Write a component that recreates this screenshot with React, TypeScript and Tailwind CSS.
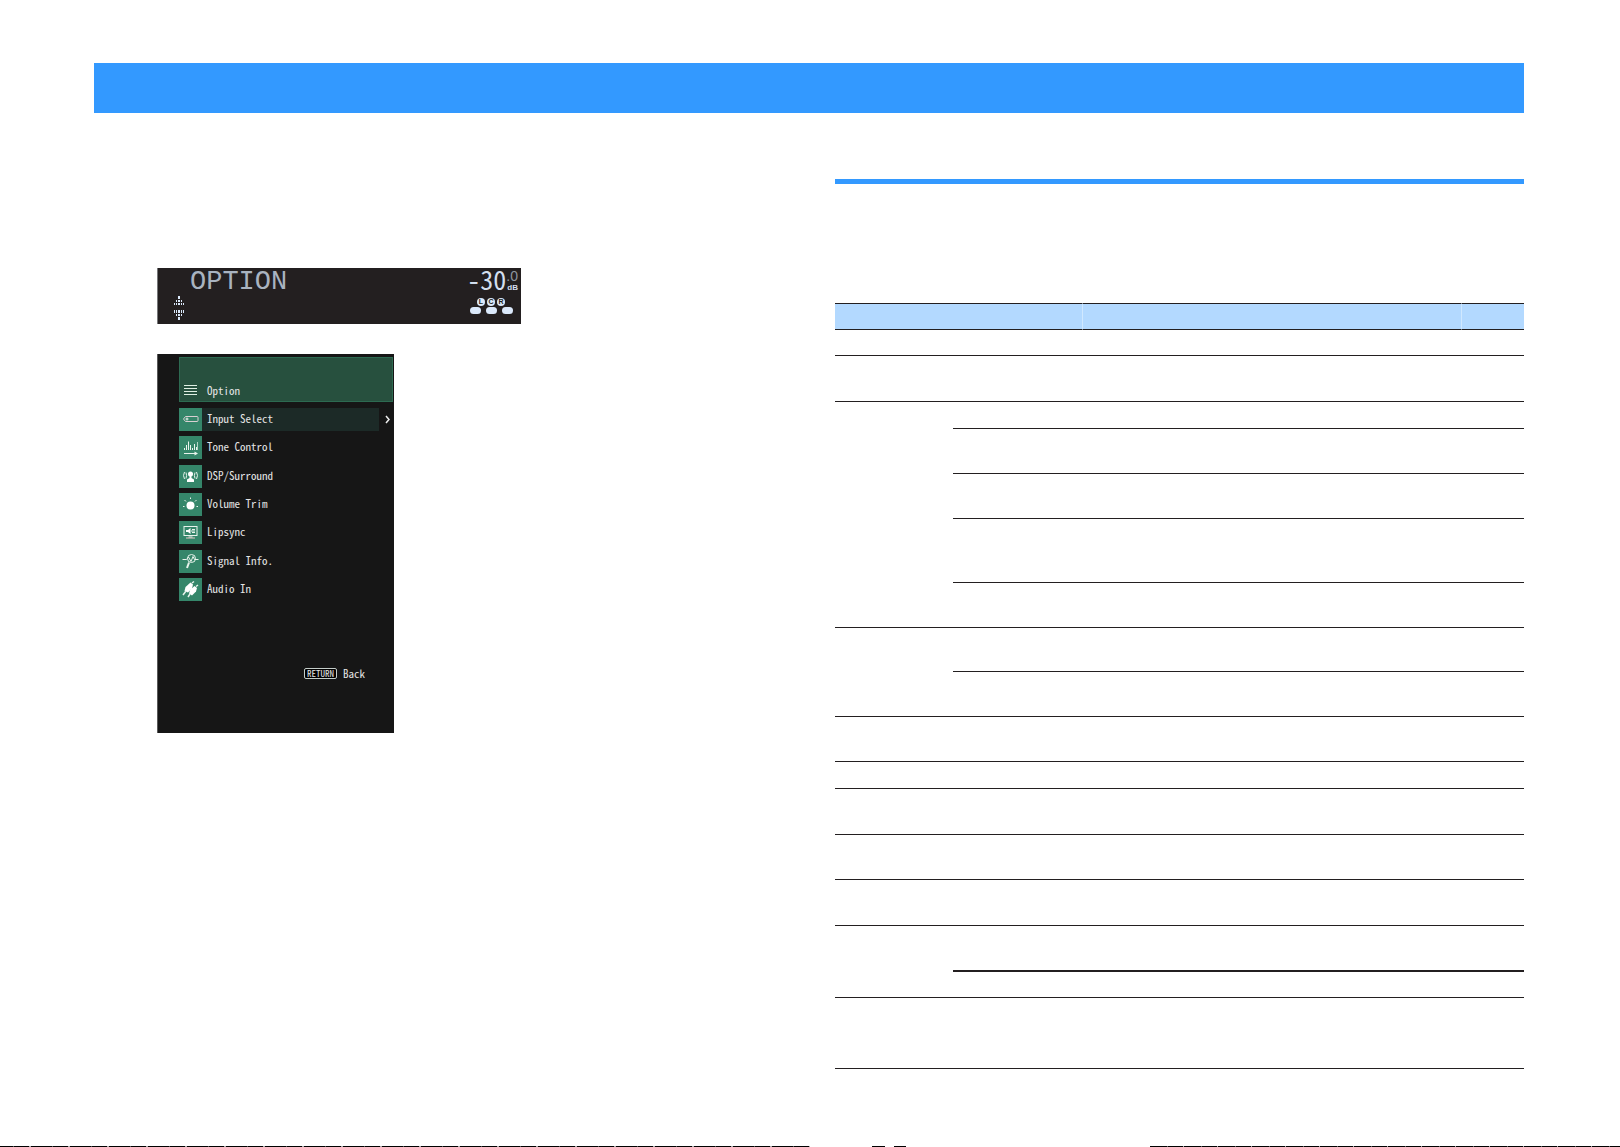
import type { ReactNode } from "react";

const mono = "font-['Noto_Sans_Mono_CJK_JP','DejaVu_Sans_Mono',monospace]";

const icons: Record<string, ReactNode> = {
  input: (
    <>
      <path d="M6.500 8.500h11.500q1 0 1 1v3q0 1-1 1H6.500l-2-2.500z" stroke="#d9cfd2" />
      <path d="M6.500 11h3M8 9.500v3" />
    </>
  ),
  tone: (
    <>
      <path d="M5.500 14v-2M7.500 14V9M9.500 14V5.500M11.500 14V9M13.500 14v-2M15.500 14V8M17.500 14v-3" />
      <path d="M18.500 14V6" strokeOpacity="0.7" />
      <path d="M5 17.500h12" />
      <path d="M15.500 15.500l3.500 2-3.500 2z" fill="#e8f3ec" stroke="none" />
    </>
  ),
  dsp: (
    <>
      <circle cx="11.500" cy="9" r="2.500" fill="#fff" stroke="none" />
      <path d="M10.500 10.500h2v2.500l2.500 1.500V17H8v-2.500l2.500-1.500z" fill="#fff" stroke="none" />
      <path d="M5.500 7q-2 3.500 0 7M7 7.500q1.200 3 0 6M17.500 7q2 3.500 0 7M16 7.500q-1.200 3 0 6" />
    </>
  ),
  volume: (
    <>
      <circle cx="11.500" cy="12.500" r="4" fill="#fff" stroke="none" />
      <path d="M4 13.500h1.500M17.500 13.500H19M11.500 4.500V6M5.500 7l1.500 1.500M17.500 7L16 8.500" />
    </>
  ),
  lipsync: (
    <>
      <rect x="5" y="5.500" width="13" height="9" />
      <path d="M7 9h2l2.500-2v6L9 11H7z" fill="#fff" stroke="none" />
      <path d="M13 8.500h3M13 11.500h3M12 10h4M9.500 16h4" />
      <path d="M7 17h9" stroke="#e6c5c5" />
    </>
  ),
  signal: (
    <>
      <circle cx="12.500" cy="8.500" r="4" />
      <path d="M3.500 9.500h4l2-2.500 2.500 4.500 2-5 1.500 3h4" />
      <path d="M10 12.500l-2 5.500" strokeWidth="2" />
    </>
  ),
  audio: (
    <>
      <path d="M5.500 13l1-4 5-4.500 2.500 2-1 4-4 4z" fill="#fff" stroke="none" />
      <path d="M10 15.500l1-3.500 4.500-4 2.500 2-1 3.500-4 4z" fill="#fff" stroke="none" />
      <path d="M7 13l-3 4M11 16l-2 3M13 5l2-1.500M17 8.500l2-1.500" strokeWidth="1.500" />
    </>
  ),
};

const menu = [
  { icon: "input", label: "Input Select" },
  { icon: "tone", label: "Tone Control" },
  { icon: "dsp", label: "DSP/Surround" },
  { icon: "volume", label: "Volume Trim" },
  { icon: "lipsync", label: "Lipsync" },
  { icon: "signal", label: "Signal Info." },
  { icon: "audio", label: "Audio In" },
];

function UpDown() {
  return (
    <svg width="11" height="24" viewBox="0 0 11 24" fill="#dbe9fb" aria-hidden="true">
      <path d="M4 0h2v3h-2zM2 4h1v2h-1zM4 4h2v2h-2zM7 4h1v2h-1zM0 7h1v2h-1zM2 7h1v2h-1zM4 7h2v2h-2zM7 7h1v2h-1zM9 7h1v2h-1z" />
      <path d="M0 14h1v3h-1zM2 14h1v3h-1zM4 14h2v3h-2zM7 14h1v3h-1zM9 14h1v3h-1zM2 18h1v2h-1zM4 18h2v2h-2zM7 18h1v2h-1zM4 21h2v3h-2z" />
    </svg>
  );
}

function FrontDisplay() {
  return (
    <section aria-label="Front display" className="flex h-14 w-[364px] justify-between border-l border-[#77787a] bg-[#231f20] text-[#d3dfef]">
      <div className="flex flex-col gap-[2px] pl-4">
        <p className="pl-4 pt-[3px] font-['Liberation_Mono',monospace] text-[27px] leading-[23px] text-[#a9b3c0]">OPTION</p>
        <UpDown />
      </div>
      <div className="flex flex-col gap-1 pr-[3px]">
        <div className="flex h-[23px] items-start justify-end">
          <span className={`text-[26px] leading-[22px] ${mono}`}>-30</span>
          <div className="flex flex-col items-end font-['Liberation_Sans',sans-serif]">
            <span className="text-sm leading-4 text-[#8d959f]">.0</span>
            <span className="text-[8px] font-bold leading-[8px]">dB</span>
          </div>
        </div>
        <div className="flex flex-col gap-px pr-[5px] pt-[3px]">
          <div className="flex justify-end gap-[2px] pr-2 font-['Liberation_Sans',sans-serif] text-[7px] font-bold leading-[8px] text-[#231f20]">
            <span className="w-2 rounded-full bg-[#dbe9fb] text-center">L</span>
            <span className="w-2 rounded-full bg-[#dbe9fb] text-center">C</span>
            <span className="w-2 rounded-full bg-[#dbe9fb] text-center">R</span>
          </div>
          <div className="flex justify-end gap-[5px]">
            <span className="h-[7px] w-[11px] rounded-sm bg-[#dbe9fb]" />
            <span className="h-[7px] w-[11px] rounded-sm bg-[#dbe9fb]" />
            <span className="h-[7px] w-[11px] rounded-sm bg-[#dbe9fb]" />
          </div>
        </div>
      </div>
    </section>
  );
}

function OptionMenu() {
  return (
    <section aria-label="Option menu" className={`flex h-[379px] w-[237px] flex-col border-l border-[#5a5a5a] bg-[#161616] pl-[21px] pr-px pt-[3px] text-[11px] leading-[21px] text-[#e4e4e4] ${mono}`}>
      <h2 className="flex h-[45px] items-end border border-[#2d6a51] bg-[#27503e]">
        <svg width="23" height="21" viewBox="0 0 23 21" className="mr-1" stroke="#dfeee2" aria-hidden="true">
          <path d="M4 5.500h13M4 8.500h13M4 11.500h13M4 14.500h13" />
        </svg>
        Option
      </h2>
      <ul className="mt-[6px] flex h-[193px] flex-col justify-between">
        {menu.map((m, i) => (
          <li key={m.label}>
            <button type="button" className="flex w-full items-center">
              <svg width="23" height="23" viewBox="0 0 23 23" fill="none" stroke="#e8f3ec" className="shrink-0 bg-[#35866a]" aria-hidden="true">
                {icons[m.icon]}
              </svg>
              <span className={i === 0 ? "h-[23px] w-[177px] bg-[#1c2a27] pl-[5px] text-left" : "h-[23px] w-[177px] pl-[5px] text-left"}>{m.label}</span>
              {i === 0 && (
                <svg width="14" height="9" viewBox="0 0 14 9" fill="none" stroke="#eee" strokeWidth="1.500" aria-hidden="true">
                  <path d="M7 1l3 3.500-3 3.500" />
                </svg>
              )}
            </button>
          </li>
        ))}
      </ul>
      <div className="mt-[62px] flex justify-end pr-7">
        <button type="button" className="flex items-center gap-[6px]">
          <span className="h-[11px] rounded-[2px] border border-[#c4cdc9] bg-black px-[2px] text-[9px] leading-[9px]">RETURN</span>
          Back
        </button>
      </div>
    </section>
  );
}

/* Row heights include the bottom rule; "sub" rules start at the second column. */
const rows = [
  { h: "h-[26px]", rule: "full" },
  { h: "h-[46px]", rule: "full" },
  { h: "h-[27px]", rule: "sub" },
  { h: "h-[45px]", rule: "sub" },
  { h: "h-[45px]", rule: "sub" },
  { h: "h-[64px]", rule: "sub" },
  { h: "h-[45px]", rule: "full" },
  { h: "h-[44px]", rule: "sub" },
  { h: "h-[45px]", rule: "full" },
  { h: "h-[45px]", rule: "full" },
  { h: "h-[27px]", rule: "full" },
  { h: "h-[46px]", rule: "full" },
  { h: "h-[45px]", rule: "full" },
  { h: "h-[46px]", rule: "full" },
  { h: "h-[46px]", rule: "thick" },
  { h: "h-[26px]", rule: "full" },
  { h: "h-[71px]", rule: "full" },
];

function ItemTable() {
  return (
    <table className="mt-[119px] w-full table-fixed border-separate border-spacing-0">
      <colgroup>
        <col className="w-[118px]" />
        <col className="w-[130px]" />
        <col />
        <col className="w-[62px]" />
      </colgroup>
      <thead>
        <tr className="h-[27px] bg-[#b3d9ff]">
          <th colSpan={2} className="border-y border-r border-b-[#231f20] border-r-[#d0e8ff] border-t-[#231f20] p-0" />
          <th className="border-y border-r border-b-[#231f20] border-r-[#d0e8ff] border-t-[#231f20] p-0" />
          <th className="border-y border-[#231f20] p-0" />
        </tr>
      </thead>
      <tbody>
        {rows.map((r, i) => {
          const sub = r.rule === "thick" ? "border-b-2 border-[#231f20] p-0" : "border-b border-[#231f20] p-0";
          return (
            <tr key={i} className={r.h}>
              <td className={r.rule === "full" ? "border-b border-[#231f20] p-0" : "p-0"} />
              <td className={sub} />
              <td className={sub} />
              <td className={sub} />
            </tr>
          );
        })}
      </tbody>
    </table>
  );
}

function FooterEdge() {
  return (
    <div className="flex h-px">
      <div className="w-1/2 bg-[repeating-linear-gradient(90deg,#000_0_13px,#555_13px_14px,#000_14px_29px,#aaa_29px_31px,#000_31px_39px)]" />
      <div className="flex w-[21%] gap-[9px] pl-[62px]">
        <span className="w-[13px] bg-black" />
        <span className="w-3 bg-black" />
      </div>
      <div className="grow bg-[repeating-linear-gradient(90deg,#000_0_17px,#666_17px_18px,#000_18px_33px,#aaa_33px_34px)]" />
    </div>
  );
}

export default function App() {
  return (
    <div className="flex min-h-screen flex-col bg-white">
      <main className="grow px-24 pt-[63px] pl-[94px]">
        <header className="h-[50px] bg-[#3399ff]" />
        <div className="grid grid-cols-[minmax(0,741fr)_minmax(0,689fr)]">
          <div className="flex flex-col gap-[30px] pl-[63px] pt-[155px]">
            <FrontDisplay />
            <OptionMenu />
          </div>
          <div className="pt-[66px]">
            <hr className="h-[5px] border-0 bg-[#3399ff]" />
            <ItemTable />
          </div>
        </div>
      </main>
      <FooterEdge />
    </div>
  );
}
